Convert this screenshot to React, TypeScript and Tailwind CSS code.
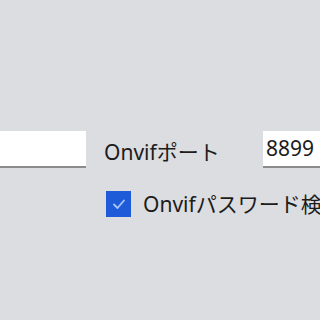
import React from "react";

export default function App() {
  return (
    <div
      className="w-[320px] h-[320px] overflow-hidden bg-[#dcdde1] text-[#1c1c1c]"
      style={{ fontFamily: '"Noto Sans", "Noto Sans CJK JP", sans-serif' }}
    >
      <div className="pt-[131px] flex flex-col">
        <div className="flex items-center h-[37px]">
          <div className="w-[86px] h-[37px] shrink-0 bg-white border-b-2 border-[#8c8c8c]" />
          <div className="ml-[18px] w-[159px] shrink-0 text-[21px] leading-none pt-[5px]">Onvifポート</div>
          <div className="w-[80px] h-[37px] shrink-0 bg-white border-b-2 border-[#8c8c8c] flex items-center pl-[3px] text-[21px] leading-none">
            8899
          </div>
        </div>
        <div className="flex items-center mt-[23px] pl-[106px] whitespace-nowrap">
          <div className="w-[25px] h-[26px] shrink-0 bg-[#1e5bd8] flex items-center justify-center">
            <svg width="16" height="16" viewBox="0 0 16 16" fill="none">
              <path d="M3 8.5 L6.5 12 L13 4.5" stroke="#a9c4f5" strokeWidth="1.8" strokeLinecap="round" strokeLinejoin="round" />
            </svg>
          </div>
          <div className="ml-[12px] text-[21px] leading-none">Onvifパスワード検証</div>
        </div>
      </div>
    </div>
  );
}
